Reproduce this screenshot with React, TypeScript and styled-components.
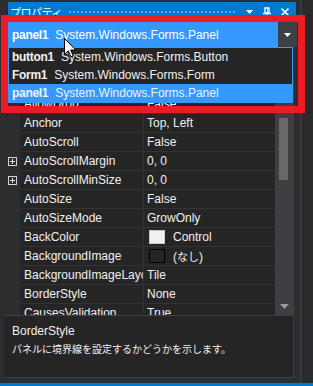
import React from "react";
import styled, { createGlobalStyle } from "styled-components";

const Global = createGlobalStyle`
  html, body { margin: 0; padding: 0; background: #2d2d30; }
  body {
    width: 313px; height: 386px; overflow: hidden;
    font-family: "Liberation Sans", "Noto Sans CJK JP", sans-serif;
    font-size: 12px; color: #f1f1f1;
  }
`;

const Page = styled.div`
  position: relative;
  width: 313px;
  height: 386px;
  display: flex;
  flex-direction: column;
  background: #2d2d30;
  overflow: hidden;
`;

const Main = styled.div`
  display: flex;
  flex: 1;
  min-height: 0;
`;

const Window = styled.div`
  width: 290px;
  margin-left: 4px;
  display: flex;
  flex-direction: column;
`;

const RightStrip = styled.div`
  flex: 1;
  margin-left: 6px;
  border-left: 2px solid #3a3a3e;
  background: #2a2a2c;
`;

const TitleBar = styled.div`
  margin: 2px -2px 0 4px;
  height: 20px;
  background: #007acc;
  display: flex;
  align-items: center;
  padding: 0 6px 0 2px;
  color: #ffffff;
`;

const Jp = styled.span<{ $size?: number }>`
  font-family: "Noto Sans CJK JP", sans-serif;
  font-size: ${(p) => p.$size ?? 10}px;
`;

const TitleText = styled(Jp)`
  line-height: 14px;
  letter-spacing: -0.5px;
`;

const Grip = styled.div`
  flex: 1;
  height: 5px;
  margin: 0 8px 0 6px;
  background-image: radial-gradient(circle, #5fb0ea 0.7px, transparent 0.9px);
  background-size: 4px 4px;
`;

const TitleButtons = styled.div`
  display: flex;
  align-items: center;
  gap: 8px;
`;

const Combo = styled.div`
  margin: 0 -3px 0 4px;
  height: 25px;
  display: flex;
`;

const ComboValue = styled.div`
  flex: 1;
  background: #3399ff;
  display: flex;
  align-items: center;
  padding-left: 4px;
  white-space: nowrap;
  color: #ffffff;
`;

const ComboButton = styled.div`
  width: 19px;
  background: #3f3f46;
  display: flex;
  align-items: center;
  justify-content: center;
`;

const Toolbar = styled.div`
  height: 29px;
`;

const GridArea = styled.div`
  height: 239px;
  display: flex;
  border-right: 1px solid #3f3f46;
`;

const Rows = styled.div`
  flex: 1;
  overflow: hidden;
  background: #252526;
`;

const Row = styled.div`
  display: grid;
  grid-template-columns: 16px 124px 1fr;
  height: 19px;
`;

const Gutter = styled.div`
  background: #2d2d30;
  display: flex;
  align-items: center;
  justify-content: center;
`;

const NameCell = styled.div`
  box-sizing: border-box;
  border-bottom: 1px solid #333337;
  border-right: 1px solid #333337;
  padding-left: 4px;
  line-height: 18px;
  white-space: nowrap;
  overflow: hidden;
  text-overflow: clip;
`;

const ValueCell = styled.div`
  box-sizing: border-box;
  border-bottom: 1px solid #333337;
  padding-left: 3px;
  line-height: 18px;
  white-space: nowrap;
  overflow: hidden;
  display: flex;
  align-items: center;
`;

const Swatch = styled.span<{ $fill: string; $edge: string }>`
  width: 16px;
  height: 14px;
  box-sizing: border-box;
  background: ${(p) => p.$fill};
  border: 1px solid ${(p) => p.$edge};
  margin: 0 8px 0 2px;
  flex: none;
`;

const ExpandBox = styled.span`
  width: 9px;
  height: 9px;
  box-sizing: border-box;
  border: 1px solid #d4d4d4;
  position: relative;
  &::before, &::after {
    content: "";
    position: absolute;
    background: #e8e8e8;
  }
  &::before { left: 1px; right: 1px; top: 3px; height: 1px; }
  &::after { top: 1px; bottom: 1px; left: 3px; width: 1px; }
`;

const Scrollbar = styled.div`
  width: 18px;
  background: #3e3e42;
  display: flex;
  flex-direction: column;
`;

const ScrollArrow = styled.div`
  height: 17px;
  display: flex;
  align-items: center;
  justify-content: center;
`;

const Thumb = styled.div`
  margin: 25px 0 0 4px;
  width: 9px;
  height: 62px;
  background: #686868;
`;

const ScrollSpace = styled.div`
  flex: 1;
`;

const Description = styled.div`
  height: 63px;
  box-sizing: border-box;
  border-top: 1px solid #3f3f46;
  border-bottom: 1px solid #3f3f46;
  border-right: 1px solid #3f3f46;
  background: #252526;
  padding: 6px 0 0 8px;
  line-height: 18px;
  white-space: nowrap;
`;

const BottomBar = styled.div`
  height: 3px;
  background: #007acc;
`;

const DropList = styled.div`
  position: absolute;
  left: 8px;
  top: 47px;
  width: 285px;
  box-sizing: border-box;
  border: 1px solid #3399ff;
  background: #252526;
`;

const ListItem = styled.div<{ $selected?: boolean }>`
  height: 18px;
  line-height: 18px;
  padding-left: 3px;
  white-space: nowrap;
  background: ${(p) => (p.$selected ? "#3399ff" : "transparent")};
  color: #f1f1f1;
`;

const Bold = styled.b`
  font-weight: 700;
  margin-right: 7px;
  letter-spacing: -0.3px;
`;

const RedFrame = styled.div`
  position: absolute;
  left: 1px;
  top: 15px;
  width: 304px;
  height: 98px;
  box-sizing: border-box;
  border: 7px solid #ed1c24;
  pointer-events: none;
`;

const Cursor = styled.svg`
  position: absolute;
  left: 64px;
  top: 38px;
`;

type Prop = { name: string; value: string; expand?: boolean; swatch?: "white" | "dark" };

const props: Prop[] = [
  { name: "AccessibleRole", value: "Default" },
  { name: "AllowDrop", value: "False" },
  { name: "Anchor", value: "Top, Left" },
  { name: "AutoScroll", value: "False" },
  { name: "AutoScrollMargin", value: "0, 0", expand: true },
  { name: "AutoScrollMinSize", value: "0, 0", expand: true },
  { name: "AutoSize", value: "False" },
  { name: "AutoSizeMode", value: "GrowOnly" },
  { name: "BackColor", value: "Control", swatch: "white" },
  { name: "BackgroundImage", value: "(なし)", swatch: "dark" },
  { name: "BackgroundImageLayout", value: "Tile" },
  { name: "BorderStyle", value: "None" },
  { name: "CausesValidation", value: "True" },
];

const items = [
  { name: "button1", type: "System.Windows.Forms.Button" },
  { name: "Form1", type: "System.Windows.Forms.Form" },
  { name: "panel1", type: "System.Windows.Forms.Panel", selected: true },
];

function renderValue(v: string) {
  if (v === "(なし)") {
    return (
      <span>
        (<Jp $size={11}>なし</Jp>)
      </span>
    );
  }
  return v;
}

export default function App() {
  return (
    <Page>
      <Global />
      <Main>
        <Window>
          <TitleBar>
            <TitleText $size={11}>プロパティ</TitleText>
            <Grip />
            <TitleButtons>
              <svg width="9" height="6" viewBox="0 0 9 6">
                <path d="M1 1 L8 1 L4.5 5 Z" fill="#fff" />
              </svg>
              <svg width="10" height="11" viewBox="0 0 10 11">
                <path d="M3 1 H7 V6 H3 Z M1 6.5 H9 M5 7 V10.5" stroke="#fff" strokeWidth="1.3" fill="none" />
                <path d="M5.6 1.6 V6" stroke="#fff" strokeWidth="1" />
              </svg>
              <svg width="10" height="10" viewBox="0 0 10 10">
                <path d="M1.5 1.5 L8.5 8.5 M8.5 1.5 L1.5 8.5" stroke="#fff" strokeWidth="1.6" />
              </svg>
            </TitleButtons>
          </TitleBar>
          <Combo>
            <ComboValue>
              <Bold>panel1</Bold>System.Windows.Forms.Panel
            </ComboValue>
            <ComboButton>
              <svg width="7" height="4" viewBox="0 0 7 4">
                <path d="M0 0 H7 L3.5 4 Z" fill="#fff" />
              </svg>
            </ComboButton>
          </Combo>
          <Toolbar />
          <GridArea>
            <Rows>
              {props.map((p) => (
                <Row key={p.name}>
                  <Gutter>{p.expand && <ExpandBox />}</Gutter>
                  <NameCell>{p.name}</NameCell>
                  <ValueCell>
                    {p.swatch && (
                      <Swatch
                        $fill={p.swatch === "white" ? "#f0f0f0" : "#252526"}
                        $edge={p.swatch === "white" ? "#c8c8c8" : "#000000"}
                      />
                    )}
                    {renderValue(p.value)}
                  </ValueCell>
                </Row>
              ))}
            </Rows>
            <Scrollbar>
              <ScrollArrow />
              <Thumb />
              <ScrollSpace />
              <ScrollArrow>
                <svg width="9" height="5" viewBox="0 0 9 5">
                  <path d="M0 0 H9 L4.5 5 Z" fill="#999999" />
                </svg>
              </ScrollArrow>
            </Scrollbar>
          </GridArea>
          <Description>
            <div>BorderStyle</div>
            <div>
              <Jp $size={10}>パネルに境界線を設定するかどうかを示します。</Jp>
            </div>
          </Description>
        </Window>
        <RightStrip />
      </Main>
      <BottomBar />
      <DropList>
        {items.map((it) => (
          <ListItem key={it.name} $selected={it.selected}>
            <Bold>{it.name}</Bold>
            {it.type}
          </ListItem>
        ))}
      </DropList>
      <RedFrame />
      <Cursor width="13" height="21" viewBox="0 0 13 21">
        <path
          d="M0.5 0.5 L0.5 16.5 L4.3 12.8 L6.8 18.8 L9.2 17.8 L6.7 12 L11.8 12 Z"
          fill="#ffffff"
          stroke="#000000"
          strokeWidth="1"
          strokeLinejoin="miter"
        />
      </Cursor>
    </Page>
  );
}
